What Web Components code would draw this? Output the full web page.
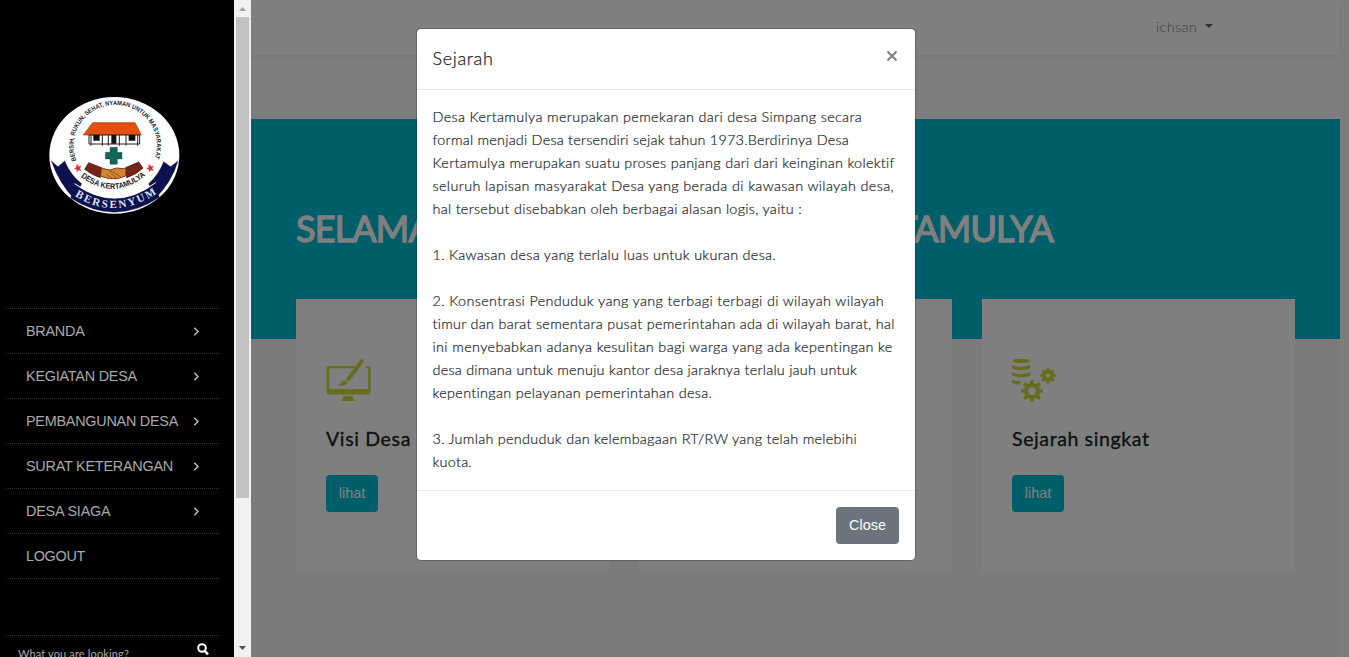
<!DOCTYPE html>
<html lang="id">
<head>
<meta charset="utf-8">
<title>Desa Kertamulya</title>
<style>
html,body{margin:0;height:100%;overflow:hidden}
body{font-family:Lato,"Open Sans",sans-serif;font-size:14.4px;line-height:23px;color:#212529}
</style>
</head>
<body>
<village-app></village-app>
<script>
function define(name, html, init) {
  const t = document.createElement('template');
  t.innerHTML = html;
  customElements.define(name, class extends HTMLElement {
    connectedCallback() {
      if (this.shadowRoot) return;
      this.attachShadow({mode: 'open'}).appendChild(t.content.cloneNode(true));
      if (init) init(this, this.shadowRoot);
    }
  });
}

// One line of text, tracked so that it fills the width given in "w".
define('fit-text', `<style>:host{display:block;white-space:nowrap;width:max-content}</style><slot></slot>`, el => {
  const natural = el.getBoundingClientRect().width;
  const n = el.textContent.length;
  if (natural) el.style.letterSpacing = ((+el.getAttribute('w') - natural) / n) + 'px';
});

define('village-logo', `<style>:host{display:block;width:150px;height:135px}svg{display:block}</style>
<svg width="150" height="135" viewBox="0 0 450 405">
  <defs>
    <path id="top" d="M109 217A125 122 0 1 1 342 217"/>
    <path id="mid" d="M122 266Q222 343 321 259"/>
    <path id="low" d="M104 324Q225 400 350 316"/>
  </defs>
  <ellipse cx="223" cy="202" rx="195" ry="175" fill="#fff"/>
  <path d="M34 219L54 236 74 219Q92 262 125 287L102 332Q58 286 34 219Z" fill="#0c1150" stroke="#111"/>
  <path d="M414 219L392 236 371 221Q356 260 326 287L347 330Q395 283 414 219Z" fill="#0c1150" stroke="#111"/>
  <path d="M108 292L131 305 103 320ZM343 290L318 305 346 320Z" fill="#fff"/>
  <path d="M106 290Q225 376 345 287L358 328Q225 416 92 330Z" fill="#0c1150" stroke="#0a0d38"/>
  <path d="M104 287Q225 373 347 284" fill="none" stroke="#fff" stroke-width="3"/>
  <path d="M158 104H285L304 141H130Z" fill="#e25012" stroke="#a53106" stroke-width="2"/>
  <path d="M147 141H299V168H147Z" fill="#fff" stroke="#222" stroke-width="3"/>
  <path d="M160 141h19v17h-19zM214 141h15v26h-15zM266 141h20v17h-20z" fill="#111"/>
  <path d="M153 141v32M187 141v32M205 141v32M238 141v32M258 141v32M293 141v32" stroke="#222" stroke-width="3"/>
  <path d="M210 178h22v15h14v20h-14v16h-22v-16h-14v-20h14z" fill="#12675a" stroke="#0a3933"/>
  <path d="M146 224L185 239 181 269Q157 262 134 244Z" fill="#772318" stroke="#301410" stroke-width="2"/>
  <path d="M296 222L256 239 260 269Q289 260 309 240Z" fill="#772318" stroke="#301410" stroke-width="2"/>
  <path d="M184 241L210 246 230 240 258 243 257 264 232 272 208 272 182 265Z" fill="#d58335" stroke="#7b3e17" stroke-width="3"/>
  <path d="M207 248L222 254 243 267M199 259L215 270M211 255L231 271" fill="none" stroke="#7b3e17" stroke-width="2"/>
  <path id="s" d="M113 229l3 7 8-2-5 7 4 7-8-2-4 6-1-8-7-2 7-4-2-8 6 4z" fill="#e02d35" stroke="#e02d35"/>
  <use href="#s" x="217"/>
  <text font-family="Liberation Sans" font-size="19" font-weight="700" fill="#151c38"><textPath href="#top" textLength="472" lengthAdjust="spacingAndGlyphs">BERSIH, RUKUN, SEHAT, NYAMAN UNTUK MASYARAKAT</textPath></text>
  <text font-family="Liberation Sans" font-size="24" font-weight="700" fill="#222"><textPath href="#mid" textLength="214" lengthAdjust="spacingAndGlyphs">DESA KERTAMULYA</textPath></text>
  <text font-family="Liberation Serif" font-size="33" font-weight="700" fill="#dfe2ef"><textPath href="#low" textLength="262">BERSENYUM</textPath></text>
</svg>`);

define('menu-item', `<style>
:host{display:flex;box-sizing:border-box;height:45px;padding:0 19px 0 20px;align-items:center;justify-content:space-between;border-bottom:1px dotted #333;font:14.4px/44px "Liberation Sans",sans-serif;color:#aaa}
:host([leaf]) svg{display:none}
</style><slot></slot><svg width="7" height="9" viewBox="0 0 7 9"><path d="M1.3.8L5 4.5 1.3 8.2" fill="none" stroke="#bbb" stroke-width="1.5"/></svg>`);

define('side-bar', `<style>
:host{display:flex;flex-direction:column;background:#000;height:657px;overflow:hidden}
village-logo{margin:88px 0 85px 40px;flex:none}
nav{margin:0 15px 0 6px;border-top:1px dotted #333}
.search{margin:56px 15px 0 6px;border-top:1px dotted #333;display:flex;justify-content:space-between;padding:6px 10px 0 12px;color:#aaa;font-size:11px;line-height:24px;height:30px;flex:none}
.search svg{margin-top:1px}
</style>
<village-logo></village-logo>
<nav><menu-item><fit-text w="58.5">BRANDA</fit-text></menu-item><menu-item><fit-text w="111">KEGIATAN DESA</fit-text></menu-item><menu-item><fit-text w="152">PEMBANGUNAN DESA</fit-text></menu-item><menu-item><fit-text w="147">SURAT KETERANGAN</fit-text></menu-item><menu-item><fit-text w="84.5">DESA SIAGA</fit-text></menu-item><menu-item leaf><fit-text w="59">LOGOUT</fit-text></menu-item></nav>
<div class="search"><fit-text w="111">What you are looking?</fit-text><svg width="12" height="13" viewBox="0 0 12 13"><circle cx="5" cy="5" r="3.8" fill="none" stroke="#fff" stroke-width="2"/><path d="M7.8 8L11 11.4" stroke="#fff" stroke-width="2.4"/></svg></div>`);

define('scroll-track', `<style>
:host{display:flex;flex-direction:column;align-items:center;background:#f1f1f1;height:657px}
i{width:13px;height:481px;background:#c1c1c1}
svg{display:block;flex:none}
.down{margin-top:auto}
</style><svg width="17" height="17"><path d="M5 11h7L8.500 7z" fill="#a3a3a3"/></svg><i></i><svg class="down" width="17" height="17"><path d="M5 6h7L8.500 10z" fill="#505050"/></svg>`);

define('icon-design', `<style>:host,svg{display:block}</style><svg width="45" height="45" viewBox="0 0 45 45">
<path d="M2.500 8H31l-2 2.200H3.200V31H42V10.200h-3L40.700 8H42.500Q44.500 8 44.500 10V34.500Q44.500 36.500 42.500 36.500H2.500Q.5 36.500.5 34.500V10Q.5 8 2.500 8ZM17.500 38h9l.8 3.200 2 1.300v.5H15v-.5l1.800-1.300z" fill="#cddc39"/>
<path d="M33.700 2.600Q37.300-.3 38 3.600L25.700 20.600 21.800 23.500 19.800 22 21.300 19.200ZM18.700 22.600l2.700 2.100Q20 28.500 11.500 27.200 14.600 26.500 15.600 24.200 16.600 22.300 18.700 22.600Z" fill="#cddc39"/></svg>`);

define('icon-data', `<style>:host,svg{display:block}.g{fill:#cddc39}.t{fill:none;stroke:#cddc39}</style><svg width="45" height="45" viewBox="0 0 45 45">
<ellipse class="g" cx="9.300" cy="2.900" rx="8.800" ry="2.200"/>
<path class="g" d="M0 7Q9 10.500 18.500 7V10.300Q9 14.400 0 10.300ZM0 14.300Q9 17.700 18.500 14.300V17.500Q9 21.200 0 17.500ZM0 21.400Q4.500 23.600 9.500 23.200L7.500 26.500Q3 26.300 0 24.600Z"/>
<circle class="t" cx="20" cy="33" r="6" stroke-width="4.200"/>
<path class="t" stroke-width="3.600" d="M20 22v4M20 40v4M9 33h4M27 33h4M12.300 25.300l2.800 2.800M25 38l2.800 2.800M12.300 40.700l2.800-2.800M25 28l2.800-2.800"/>
<circle class="t" cx="36" cy="17.500" r="4" stroke-width="3.800"/>
<path class="t" stroke-width="2.800" d="M36 9.500v3M36 22.500v3M28 17.500h3M41 17.500h3M30.400 11.900l2 2M39.600 21.100l2 2M30.400 23.100l2-2M39.600 13.900l2-2"/></svg>`);

define('info-card', `<style>
:host{display:block;box-sizing:border-box;height:273px;background:#fff;color:#212529;padding:59px 30px}
.title{font-size:19.5px;line-height:24px;margin:24px 0;font-weight:400;-webkit-text-stroke:.35px #212529;height:24px}
.btn{display:block;width:52px;height:37px;border:0;border-radius:4px;background:#00bcd4;color:#fff;font:14.4px "Liberation Sans",sans-serif;padding:0 0 1px}
</style><slot name="icon"></slot><div class="title"><slot name="title"></slot></div><button class="btn">lihat</button>`);

define('top-bar', `<style>
:host{display:flex;box-sizing:border-box;width:1089px;height:55px;padding:15px 127px 0 0;justify-content:flex-end;background:#fff;box-shadow:0 2px 4px rgba(0,0,0,.05);color:#808080;font-weight:300}
i{margin:9px 0 0 8px;border:4.500px solid transparent;border-top-color:#606060;border-bottom:0;height:0}
</style><fit-text w="41">ichsan</fit-text><i></i>`);

define('village-page', `<style>
:host{display:block;height:657px;background:#f8fafc}
.hero{width:1089px;height:220px;margin-top:64px;background:#00bcd4;color:#fff;box-sizing:border-box;padding:89px 45px 0}
h1{margin:0;font-size:36px;line-height:40px;font-weight:400;-webkit-text-stroke:1.300px #fff}
.lower{width:1089px;height:318px;background:#f7f7f7}
.cards{display:grid;grid-template-columns:repeat(3,313px);gap:30px;height:273px;margin-top:51px}
</style>
<top-bar></top-bar>
<div class="hero"><h1><fit-text w="757">SELAMAT DATANG DI WEB DESA KERTAMULYA</fit-text></h1>
<div class="cards">
<info-card><icon-design slot="icon"></icon-design><fit-text slot="title" w="85">Visi Desa</fit-text></info-card>
<info-card><icon-design slot="icon"></icon-design></info-card>
<info-card><icon-data slot="icon"></icon-data><fit-text slot="title" w="137.500">Sejarah singkat</fit-text></info-card>
</div></div>
<div class="lower"></div>`);

define('modal-dialog', `<style>
:host{display:flex;justify-content:center;align-items:flex-start;box-sizing:border-box;background:rgba(0,0,0,.5)}
.box{box-sizing:border-box;width:500px;height:533px;background:#fff;background-clip:padding-box;border:1px solid rgba(0,0,0,.2);border-radius:5px}
header{height:60px;border-bottom:1px solid #e9ecef;display:flex;justify-content:space-between;padding:0 17px 0 15.500px;font-size:18px;line-height:58px;font-weight:300;-webkit-text-stroke:.25px #212529}
header svg{margin-top:21px}
section{box-sizing:border-box;padding:15px 15.500px 0;height:400px;color:#212529;font-weight:300;-webkit-text-stroke:.2px #212529}
footer{box-sizing:border-box;height:70px;border-top:1px solid #e9ecef;padding:16px;display:flex;justify-content:flex-end}
button{width:63px;height:37px;border:0;border-radius:4px;background:#6c757d;color:#fff;font:14.4px "Liberation Sans",sans-serif;padding:0 0 1px}
</style>
<div class="box"><header><slot name="title"></slot><svg width="12" height="12"><path d="M1.500 1.500l9 9M10.500 1.500l-9 9" stroke="#7f7f7f" stroke-width="2.100"/></svg></header>
<section><slot></slot></section><footer><button>Close</button></footer></div>`);

define('village-app', `<style>
:host{display:grid;grid-template-columns:234px 17px 1098px;width:1349px;height:657px;overflow:hidden;position:relative}
modal-dialog{position:absolute;top:0;left:251px;width:1098px;height:657px;padding:28px 268px 0 0}
.gap{height:23px}
</style>
<side-bar></side-bar><scroll-track></scroll-track><village-page></village-page>
<modal-dialog>
<fit-text slot="title" w="61">Sejarah</fit-text>
<fit-text w="429.5">Desa Kertamulya merupakan pemekaran dari desa Simpang secara</fit-text>
<fit-text w="416.5">formal menjadi Desa tersendiri sejak tahun 1973.Berdirinya Desa</fit-text>
<fit-text w="462.5">Kertamulya merupakan suatu proses panjang dari dari keinginan kolektif</fit-text>
<fit-text w="461.5">seluruh lapisan masyarakat Desa yang berada di kawasan wilayah desa,</fit-text>
<fit-text w="369.5">hal tersebut disebabkan oleh berbagai alasan logis, yaitu :</fit-text>
<div class="gap"></div>
<fit-text w="343.5">1. Kawasan desa yang terlalu luas untuk ukuran desa.</fit-text>
<div class="gap"></div>
<fit-text w="451.5">2. Konsentrasi Penduduk yang yang terbagi terbagi di wilayah wilayah</fit-text>
<fit-text w="462.5">timur dan barat sementara pusat pemerintahan ada di wilayah barat, hal</fit-text>
<fit-text w="460.5">ini menyebabkan adanya kesulitan bagi warga yang ada kepentingan ke</fit-text>
<fit-text w="424.5">desa dimana untuk menuju kantor desa jaraknya terlalu jauh untuk</fit-text>
<fit-text w="280">kepentingan pelayanan pemerintahan desa.</fit-text>
<div class="gap"></div>
<fit-text w="424.5">3. Jumlah penduduk dan kelembagaan RT/RW yang telah melebihi</fit-text>
<fit-text w="39.5">kuota.</fit-text>
</modal-dialog>`);
</script>
</body>
</html>
